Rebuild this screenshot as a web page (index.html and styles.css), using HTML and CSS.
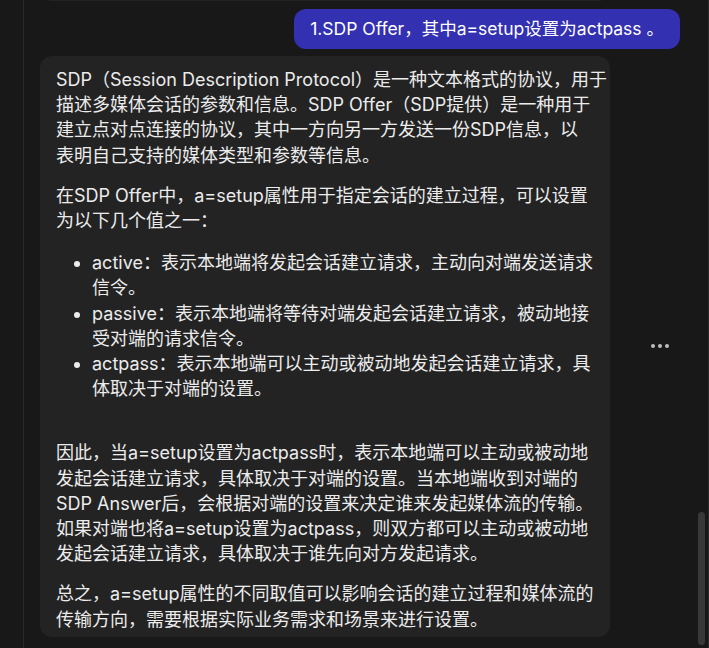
FILE: index.html
```html
<!DOCTYPE html>
<html lang="zh-CN">
<head>
<meta charset="utf-8">
<title>Chat</title>
<link rel="stylesheet" href="styles.css">
</head>
<body>
<div class="app">
  <aside class="sidebar"></aside>
  <main class="chat">
    <div class="prev-bubble"></div>
    <div class="user-row">
      <div class="user-bubble">1.SDP Offer，其中a=setup设置为actpass 。</div>
    </div>
    <div class="assistant-row">
      <div class="assistant-bubble">
        <p>SDP（Session Description Protocol）是一种文本格式的协议，用于<br>描述多媒体会话的参数和信息。SDP Offer（SDP提供）是一种用于<br>建立点对点连接的协议，其中一方向另一方发送一份SDP信息，以<br>表明自己支持的媒体类型和参数等信息。</p>
        <p>在SDP Offer中，a=setup属性用于指定会话的建立过程，可以设置<br>为以下几个值之一：</p>
        <ul>
          <li>active：表示本地端将发起会话建立请求，主动向对端发送请求<br>信令。</li>
          <li>passive：表示本地端将等待对端发起会话建立请求，被动地接<br>受对端的请求信令。</li>
          <li>actpass：表示本地端可以主动或被动地发起会话建立请求，具<br>体取决于对端的设置。</li>
        </ul>
        <p>因此，当a=setup设置为actpass时，表示本地端可以主动或被动地<br>发起会话建立请求，具体取决于对端的设置。当本地端收到对端的<br>SDP Answer后，会根据对端的设置来决定谁来发起媒体流的传输。<br>如果对端也将a=setup设置为actpass，则双方都可以主动或被动地<br>发起会话建立请求，具体取决于谁先向对方发起请求。</p>
        <p>总之，a=setup属性的不同取值可以影响会话的建立过程和媒体流的<br>传输方向，需要根据实际业务需求和场景来进行设置。</p>
      </div>
      <button class="more" type="button" aria-label="更多"><span></span><span></span><span></span></button>
    </div>
  </main>
  <div class="scroll-track"><div class="scroll-thumb"></div></div>
</div>
</body>
</html>
```

FILE: styles.css
```css
html, body {
  margin: 0;
  height: 100%;
  background: #181818;
  overflow: hidden;
}

body {
  font-family: Inter, "Noto Sans CJK SC", sans-serif;
  color: #ececec;
}

.app {
  display: flex;
  height: 648px;
}

.sidebar {
  flex: none;
  width: 23px;
  border-right: 1px solid #2a2a2a;
}

.chat {
  flex: 1;
  min-width: 0;
  display: flex;
  flex-direction: column;
  padding: 0 17px 0 16px;
}

.prev-bubble {
  flex: none;
  width: 570px;
  height: 24px;
  margin-top: -23px;
  border-radius: 12px;
  background: #232323;
}

.user-row {
  display: flex;
  justify-content: flex-end;
  margin-top: 8px;
}

.user-bubble {
  background: #3330b2;
  color: #ffffff;
  font-size: 17.5px;
  line-height: 24px;
  padding: 8px 16px;
  border-radius: 12px;
  white-space: nowrap;
}

.assistant-row {
  display: flex;
  align-items: center;
  margin-top: 7px;
}

.assistant-bubble {
  flex: none;
  width: 570px;
  box-sizing: border-box;
  padding: 11px 4px 5px 16px;
  background: #232323;
  border-radius: 12px;
  font-size: 18px;
  line-height: 25.2px;
  white-space: nowrap;
}

.assistant-bubble p {
  margin: 0 0 15px;
}

.assistant-bubble p:last-child {
  margin-bottom: 0;
}

.assistant-bubble ul {
  margin: 17px 0 39px;
  padding-left: 36px;
}

.more {
  flex: none;
  margin-left: 36px;
  width: 28px;
  height: 28px;
  padding: 0;
  border: 0;
  background: none;
  display: flex;
  align-items: center;
  justify-content: center;
  gap: 3.3px;
}

.more span {
  width: 4px;
  height: 4px;
  border-radius: 50%;
  background: #bdbdbd;
}

.scroll-track {
  flex: none;
  width: 12px;
  box-sizing: border-box;
  border-right: 1px solid #2a2a2a;
}

.scroll-thumb {
  margin-top: 512px;
  margin-left: 1px;
  width: 7px;
  height: 133px;
  border-radius: 4px;
  background: #383838;
}
```
